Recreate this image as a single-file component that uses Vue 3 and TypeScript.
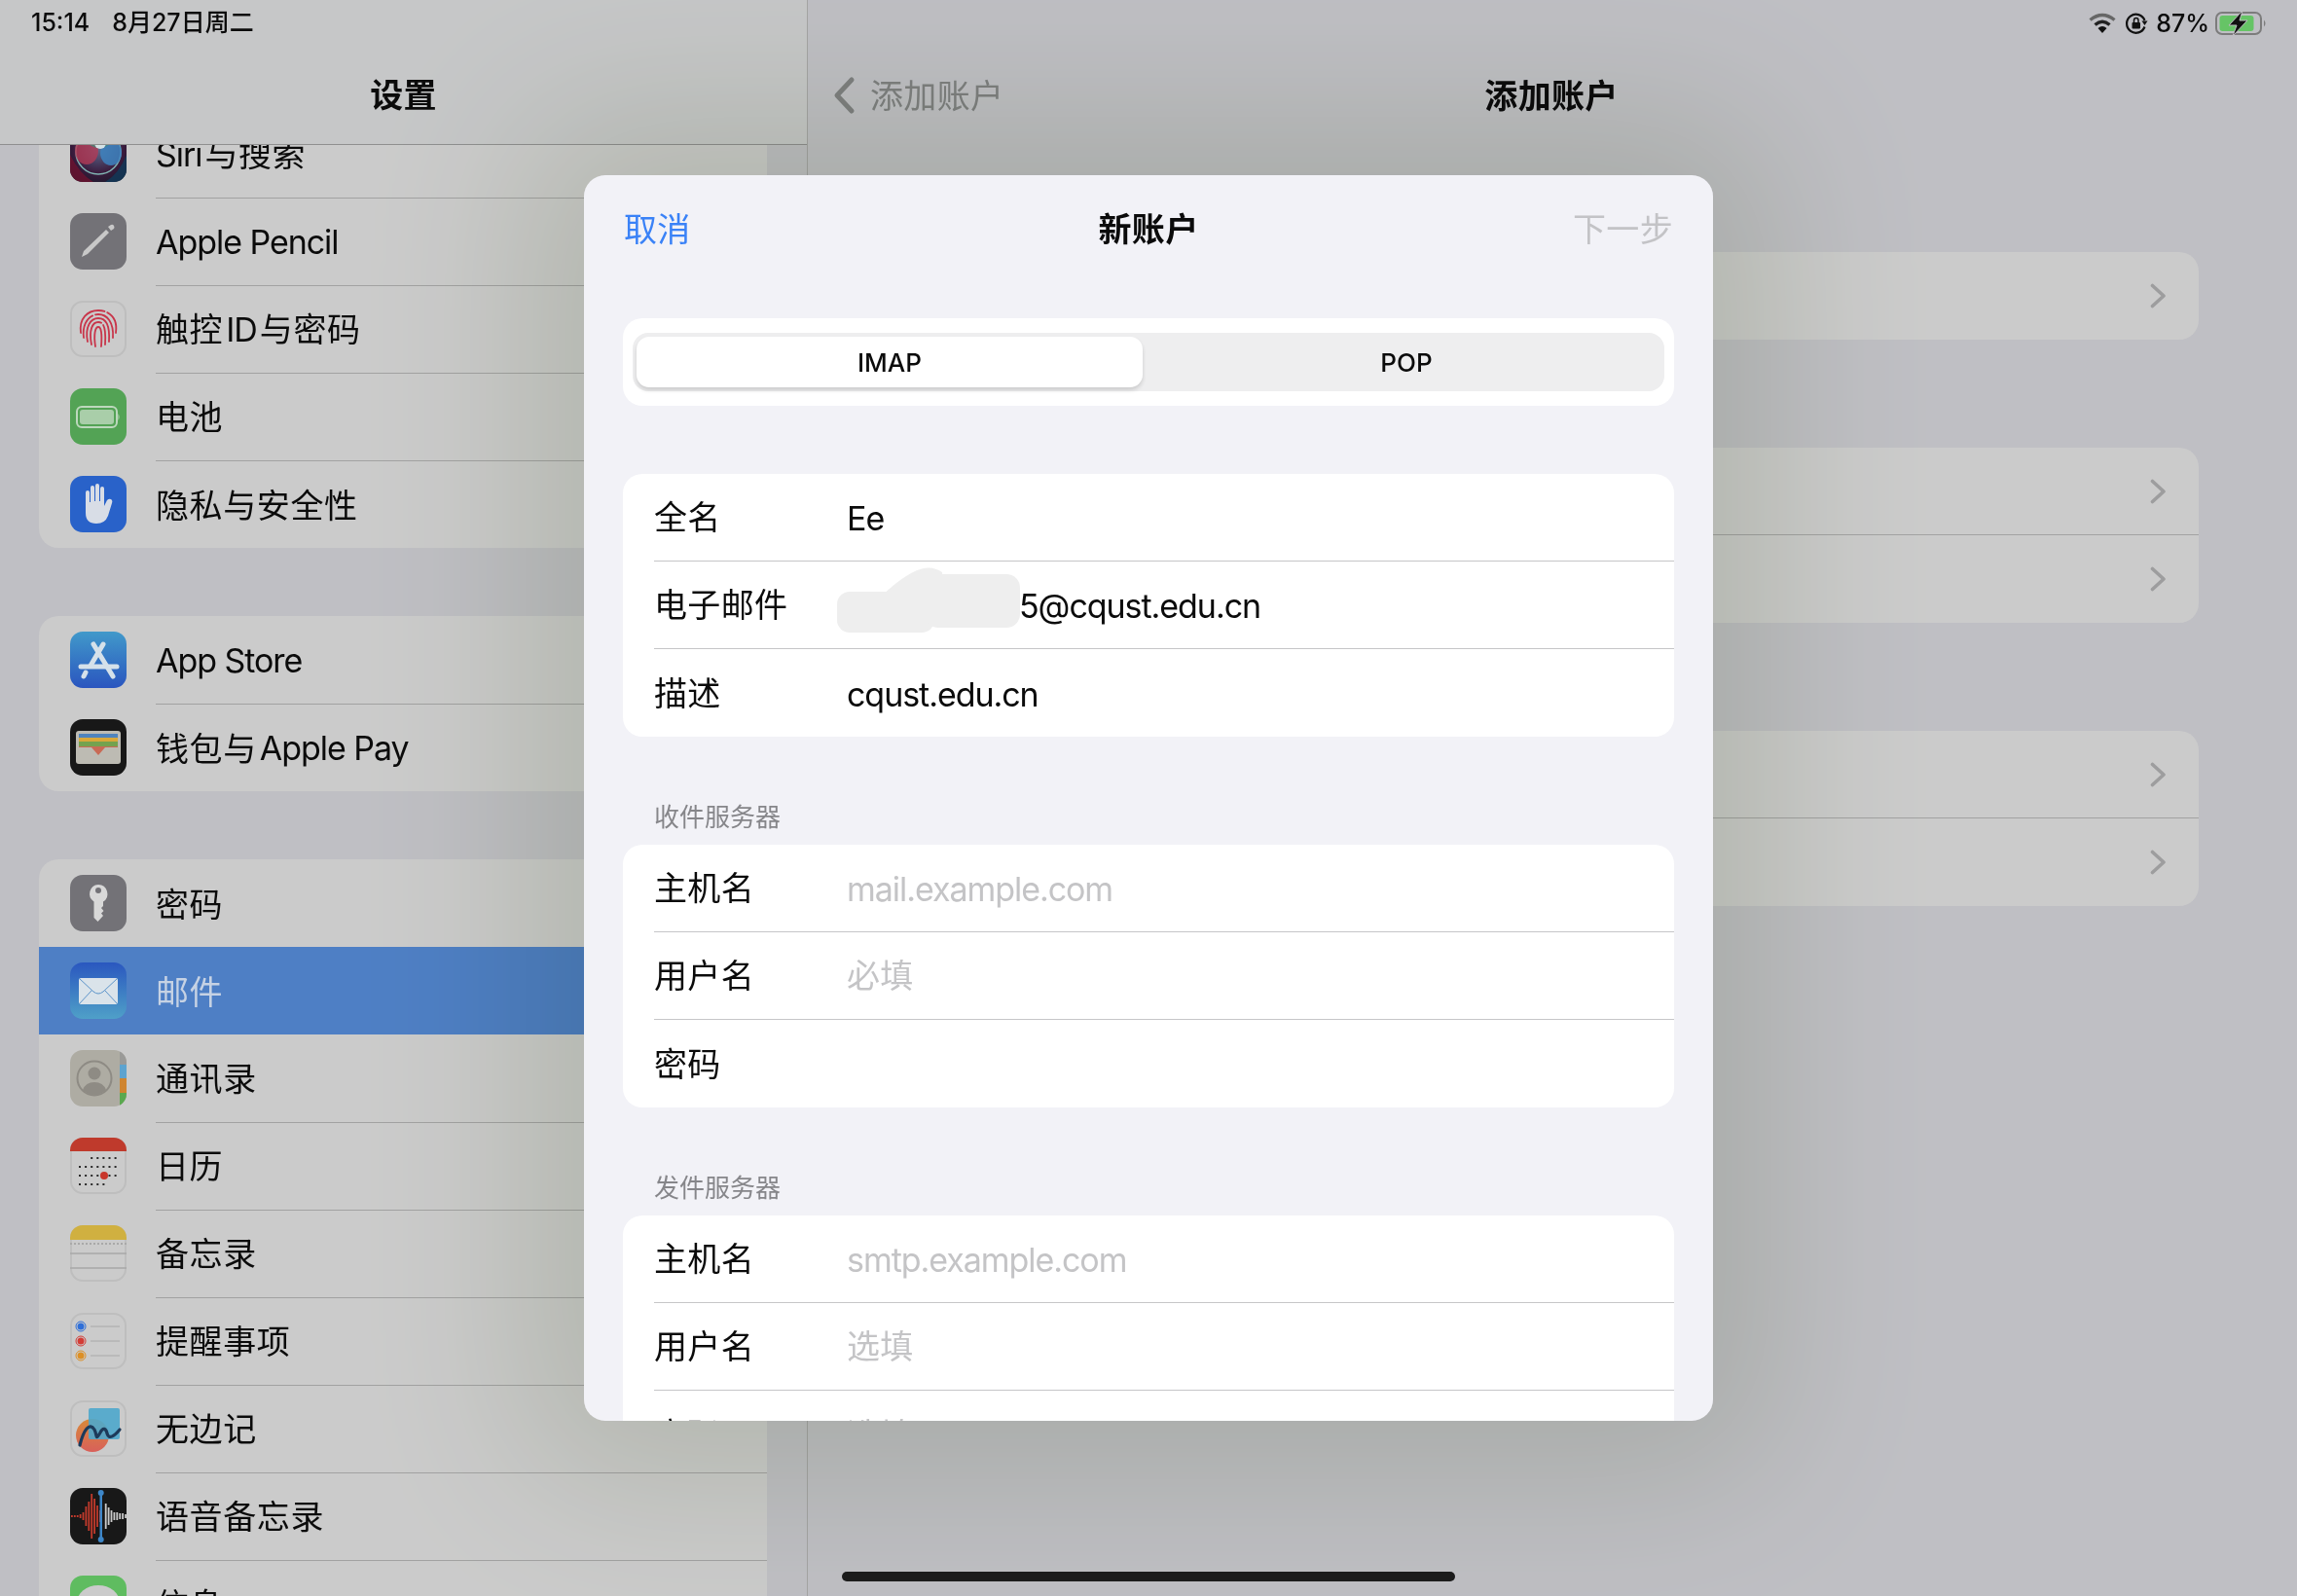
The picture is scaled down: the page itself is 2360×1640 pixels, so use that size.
<template>
  <div class="ipad">
    <aside class="sidebar">
      <header class="nav side-nav"><span class="nav-title cjk">设置</span></header>
      <div class="side-list">
        <section v-for="(group, g) in sideGroups" :key="g" class="side-group">
          <div
            v-for="(item, i) in group"
            :key="item.id"
            class="side-row"
            :class="{ selected: item.id === 'mail', 'no-line': i === group.length - 1 || item.id === 'mail' || group[i + 1]?.id === 'mail' }"
          >
            <div class="app-icon" :class="{ outlined: outlinedIcons.includes(item.id) }">
              <svg viewBox="0 0 58 58" width="58" height="58">
                <template v-if="item.id === 'siri'">
                  <defs>
                    <radialGradient id="siri-bg" cx="0.5" cy="0.4" r="0.75">
                      <stop offset="0%" stop-color="#5b6f92" />
                      <stop offset="60%" stop-color="#3a1a3c" />
                      <stop offset="100%" stop-color="#0f1a26" />
                    </radialGradient>
                  </defs>
                  <rect width="58" height="58" fill="url(#siri-bg)" />
                  <path d="M0 58V30Q10 50 24 58Z" fill="#6e1230" opacity=".8" />
                  <path d="M58 58V30Q50 50 36 58Z" fill="#123a5a" opacity=".8" />
                  <circle cx="29" cy="27" r="23" fill="none" stroke="#7fb3b2" stroke-width="1.5" />
                  <ellipse cx="17" cy="26" rx="12" ry="14" fill="#b23a55" opacity=".8" />
                  <ellipse cx="42" cy="28" rx="11" ry="13" fill="#3d82c0" opacity=".85" />
                  <ellipse cx="30" cy="15" rx="12" ry="8" fill="#3a8f78" opacity=".7" />
                  <circle cx="31" cy="18" r="6" fill="#e6ecef" opacity=".9" />
                </template>
                <template v-else-if="item.id === 'pencil'">
                  <rect width="58" height="58" fill="#737277" />
                  <path d="M12 45 14 39 37 17 40 20 18 42Z" fill="#c8c8c8" />
                  <path d="M39 14 42 12Q44 11 45 13 46 15 45 16L42 18Z" fill="#c8c8c8" />
                </template>
                <template v-else-if="item.id === 'touch'">
                  <g fill="none" stroke="#c8354a" stroke-width="1.800" stroke-linecap="round">
                    <path d="M11 33C9 18 18 10 29 10 41 10 49 19 47 33" stroke-dasharray="40 3 30 3 60" />
                    <path d="M14 38C12 23 20 14 29 14 38 14 45 22 44 38" stroke-dasharray="26 3 60" />
                    <path d="M18 42C15 27 21 18 29 18 37 18 41 25 40 42" />
                    <path d="M22 45C19 30 23 22 29 22 35 22 37 29 36 45" stroke-dasharray="30 3 60" />
                    <path d="M26 47C24 34 26 27 29 27 32 27 33 34 32 47" />
                  </g>
                </template>
                <template v-else-if="item.id === 'battery'">
                  <rect width="58" height="58" fill="#53a355" />
                  <rect x="7" y="19" width="41" height="21" rx="5" fill="none" stroke="#bdd8bd" stroke-width="2" />
                  <rect x="10" y="22" width="35" height="15" rx="3" fill="#a9cea9" />
                  <path d="M49.500 26Q51.500 29.500 49.500 33Z" fill="#bdd8bd" />
                </template>
                <template v-else-if="item.id === 'privacy'">
                  <rect width="58" height="58" fill="#2962c9" />
                  <path
                    d="M16 17Q16 15 18 15 20 15 20 17V27H21V12Q21 10 23 10 25 10 25 12V26H26V10Q26 8 28 8 30 8 30 10V26H31V13Q31 11 33 11 35 11 35 13V31L38 25Q40 23 42 24 44 25 43 28L39 41Q36 49 27 49 16 49 16 38Z"
                    fill="#d8dde6"
                  />
                </template>
                <template v-else-if="item.id === 'store'">
                  <defs>
                    <linearGradient id="store-bg" x1="0" y1="0" x2="0" y2="1">
                      <stop offset="0%" stop-color="#4199ca" />
                      <stop offset="100%" stop-color="#2a55bf" />
                    </linearGradient>
                  </defs>
                  <rect width="58" height="58" fill="url(#store-bg)" />
                  <g fill="none" stroke="#d5e1ea" stroke-width="5" stroke-linecap="round">
                    <path d="M24 13 44 46" />
                    <path d="M34 13 21 35" />
                    <path d="M16 42 14 46" />
                    <path d="M11 36H48" />
                  </g>
                </template>
                <template v-else-if="item.id === 'wallet'">
                  <rect width="58" height="58" fill="#181818" />
                  <rect x="6" y="12" width="46" height="34" rx="3" fill="#bdbbb3" />
                  <rect x="9" y="15" width="40" height="4" fill="#4f84bd" />
                  <rect x="9" y="19" width="40" height="4" fill="#d9a83a" />
                  <rect x="9" y="23" width="40" height="5" fill="#74a24f" />
                  <path d="M9 28H49V29H36L29 37 22 29H9Z" fill="#c96a55" />
                </template>
                <template v-else-if="item.id === 'password'">
                  <rect width="58" height="58" fill="#737277" />
                  <path
                    d="M29 10A9.500 9.500 0 0 1 34 27.500V32L32 34 34.500 37 32 39.500 34 42 28.500 48 24.500 44V27.500A9.500 9.500 0 0 1 29 10Z"
                    fill="#d8d8d8"
                  />
                  <circle cx="29" cy="16" r="3" fill="#737277" />
                </template>
                <template v-else-if="item.id === 'mail'">
                  <defs>
                    <linearGradient id="mail-bg" x1="0" y1="0" x2="0" y2="1">
                      <stop offset="0%" stop-color="#2a57bf" />
                      <stop offset="100%" stop-color="#4fa0c8" />
                    </linearGradient>
                  </defs>
                  <rect width="58" height="58" fill="url(#mail-bg)" />
                  <rect x="9" y="16" width="40" height="27" rx="2" fill="#dae3ea" />
                  <path d="M9 16 24 30Q29 34 34 30L49 16M9 43 22 29M49 43 36 29" fill="none" stroke="#5b93c9" stroke-width="1" />
                </template>
                <template v-else-if="item.id === 'contacts'">
                  <rect width="58" height="58" fill="#aeaca3" />
                  <rect x="51" width="7" height="15" fill="#9a9a98" />
                  <rect x="51" y="15" width="7" height="14" fill="#5da3cf" />
                  <rect x="51" y="29" width="7" height="15" fill="#cf8530" />
                  <rect x="51" y="44" width="7" height="14" fill="#5aa84f" />
                  <circle cx="25" cy="29" r="17.500" fill="none" stroke="#8e8b84" stroke-width="2" />
                  <circle cx="25" cy="24" r="6.500" fill="#8e8b84" />
                  <path d="M13 41Q16 33 25 33 34 33 37 41 32 46 25 46 18 46 13 41Z" fill="#8e8b84" />
                </template>
                <template v-else-if="item.id === 'calendar'">
                  <rect width="58" height="14" fill="#bf3a2c" />
                  <rect v-for="d in calendarDots" :key="d.x + '-' + d.y" :x="d.x" :y="d.y" width="2" height="2" fill="#2b2b2b" />
                  <circle cx="35" cy="39" r="4" fill="#c8372c" />
                </template>
                <template v-else-if="item.id === 'notes'">
                  <rect width="58" height="15" fill="#d0b040" />
                  <path d="M0 19H58" stroke="#a9a9a9" stroke-width="2" stroke-dasharray="2 2" />
                  <path d="M0 29H58M0 44H58" stroke="#a8a8a8" stroke-width="1.500" />
                </template>
                <template v-else-if="item.id === 'reminders'">
                  <template v-for="r in reminderDots" :key="r.y">
                    <circle cx="11" :cy="r.y" r="5" fill="none" :stroke="r.color" stroke-width="1" />
                    <circle cx="11" :cy="r.y" r="3.500" :fill="r.color" />
                    <path :d="`M21 ${r.y}H51`" stroke="#a8a8a8" stroke-width="1" />
                  </template>
                </template>
                <template v-else-if="item.id === 'freeform'">
                  <defs>
                    <linearGradient id="free-bg" x1="0" y1="0" x2="0" y2="1">
                      <stop offset="0%" stop-color="#d98a3a" />
                      <stop offset="100%" stop-color="#d8605a" />
                    </linearGradient>
                  </defs>
                  <circle cx="23" cy="36" r="17" fill="url(#free-bg)" />
                  <rect x="19" y="8" width="32" height="32" rx="2" fill="#4ea7cc" opacity=".9" />
                  <path d="M10 46C14 30 20 22 25 30 28 36 26 42 31 33 34 27 37 29 38 34 40 41 46 36 51 30" fill="none" stroke="#1d3a5a" stroke-width="3.200" stroke-linecap="round" />
                </template>
                <template v-else-if="item.id === 'voice'">
                  <rect width="58" height="58" fill="#181818" />
                  <rect v-for="b in voiceBars" :key="b.x" :x="b.x" :y="29 - b.h / 2" width="1.800" :height="b.h" :fill="b.x < 31 ? '#c23a2c' : '#c9c9c9'" />
                  <rect x="30.500" y="5" width="2.500" height="48" fill="#3d86c8" />
                  <circle cx="31.700" cy="5" r="3" fill="#3d86c8" />
                  <circle cx="31.700" cy="53" r="3" fill="#3d86c8" />
                </template>
                <template v-else-if="item.id === 'message'">
                  <rect width="58" height="58" fill="#5fbc60" />
                  <ellipse cx="29" cy="28" rx="22" ry="18" fill="#cbcbcb" />
                </template>
              </svg>
            </div>
            <div class="side-body">
              <span v-for="(r, k) in runs(item.label)" :key="k" :class="r.latin ? 'latin' : 'cjk'">{{ r.text }}</span>
            </div>
          </div>
        </section>
      </div>
    </aside>

    <main class="detail">
      <header class="nav detail-nav">
        <div class="back">
          <svg width="26" height="40" viewBox="0 0 26 40">
            <path d="M21 4 6 20 21 36" fill="none" stroke="#7e8080" stroke-width="5" stroke-linecap="round" stroke-linejoin="round" />
          </svg>
          <span class="cjk">添加账户</span>
        </div>
        <span class="nav-title cjk">添加账户</span>
        <span></span>
      </header>
      <div class="detail-list">
        <section v-for="(count, g) in detailGroups" :key="g" class="detail-group">
          <div v-for="n in count" :key="n" class="detail-row">
            <svg width="17" height="26" viewBox="0 0 17 26">
              <path d="M2.500 2.500 14 13 2.500 23.500" fill="none" stroke="#9d9d9e" stroke-width="3.600" stroke-linecap="round" stroke-linejoin="round" />
            </svg>
          </div>
        </section>
      </div>
    </main>

    <div class="status-left">
      <span>15:14</span>
      <span>8月27日周二</span>
    </div>
    <div class="status-right">
      <svg class="wifi" width="30" height="22" viewBox="0 0 30 22">
        <path d="M15 21 10.500 16Q15 12 19.500 16Z" fill="#111" />
        <path d="M7.500 12.500Q15 6 22.500 12.500" fill="none" stroke="#222" stroke-width="3.400" />
        <path d="M2.500 7.500Q15 -2.500 27.500 7.500" fill="none" stroke="#666" stroke-width="3.400" />
      </svg>
      <svg class="rotation" width="24" height="24" viewBox="0 0 24 24">
        <path d="M20.500 9A9.500 9.500 0 1 0 20.500 15.500" fill="none" stroke="#111" stroke-width="2.200" />
        <path d="M17.500 9.500H23.500L20.500 14Z" fill="#111" />
        <rect x="7.500" y="11" width="8.500" height="6.500" rx="1" fill="#111" />
        <path d="M9.500 11V9Q9.500 6.500 11.800 6.500 14 6.500 14 9V11" fill="none" stroke="#111" stroke-width="1.500" />
      </svg>
      <span class="percent">87%</span>
      <svg width="54" height="26" viewBox="0 0 54 26">
        <rect x="1" y="2" width="46" height="22" rx="6" fill="none" stroke="#7c7c7c" stroke-width="2" />
        <rect x="4.500" y="5" width="35" height="16" rx="3" fill="#66c466" />
        <path d="M50 9.500Q53 13 50 16.500Z" fill="#7c7c7c" />
        <path d="M28 0 14 15H22L18 26 33 10H25Z" fill="#111" stroke="#c0bfc4" stroke-width="1" />
      </svg>
    </div>

    <div class="modal-shadow"></div>
    <div class="modal">
      <header class="modal-nav">
        <span class="cancel cjk">取消</span>
        <span class="modal-title cjk">新账户</span>
        <span class="next cjk">下一步</span>
      </header>

      <section class="card segment-card">
        <div class="segment">
          <div class="seg-item active">IMAP</div>
          <div class="seg-item">POP</div>
        </div>
      </section>

      <section v-for="form in forms" :key="form.title" class="form-section">
        <h3 v-if="form.title.length" class="form-title">{{ form.title }}</h3>
        <div class="card">
          <div v-for="field in form.fields" :key="field.label" class="form-row">
            <span class="form-label cjk">{{ field.label }}</span>
            <span v-if="field.value || field.hint" :class="{ hint: !field.value, 'email-value': field.redacted }">
              <span v-for="(r, k) in runs(field.value || field.hint || '')" :key="k" :class="r.latin ? 'latin' : 'cjk'">{{ r.text }}</span>
            </span>
            <svg v-if="field.redacted" class="blur-blob" width="190" height="68" viewBox="0 0 190 68">
              <g fill="#eeeeee">
                <rect x="0" y="26" width="100" height="42" rx="13" />
                <rect x="90" y="8" width="98" height="55" rx="14" />
                <path d="M40 36Q62 14 78 6 95 -3 108 6L112 44H40Z" />
              </g>
            </svg>
          </div>
        </div>
      </section>
    </div>

    <div class="home-bar"></div>
  </div>
</template>

<script setup lang="ts">
interface SideItem {
  id: string
  label: string
}

interface Field {
  label: string
  value?: string
  hint?: string
  redacted?: boolean
}

const sideGroups: SideItem[][] = [
  [
    { id: 'siri', label: 'Siri与搜索' },
    { id: 'pencil', label: 'Apple Pencil' },
    { id: 'touch', label: '触控ID与密码' },
    { id: 'battery', label: '电池' },
    { id: 'privacy', label: '隐私与安全性' }
  ],
  [
    { id: 'store', label: 'App Store' },
    { id: 'wallet', label: '钱包与Apple Pay' }
  ],
  [
    { id: 'password', label: '密码' },
    { id: 'mail', label: '邮件' },
    { id: 'contacts', label: '通讯录' },
    { id: 'calendar', label: '日历' },
    { id: 'notes', label: '备忘录' },
    { id: 'reminders', label: '提醒事项' },
    { id: 'freeform', label: '无边记' },
    { id: 'voice', label: '语音备忘录' },
    { id: 'message', label: '信息' }
  ]
]

const outlinedIcons = ['touch', 'calendar', 'notes', 'reminders', 'freeform']

const detailGroups = [1, 2, 2]

const forms: { title: string; fields: Field[] }[] = [
  {
    title: '',
    fields: [
      { label: '全名', value: 'Ee' },
      { label: '电子邮件', value: '5@cqust.edu.cn', redacted: true },
      { label: '描述', value: 'cqust.edu.cn' }
    ]
  },
  {
    title: '收件服务器',
    fields: [
      { label: '主机名', hint: 'mail.example.com' },
      { label: '用户名', hint: '必填' },
      { label: '密码' }
    ]
  },
  {
    title: '发件服务器',
    fields: [
      { label: '主机名', hint: 'smtp.example.com' },
      { label: '用户名', hint: '选填' },
      { label: '密码', hint: '选填' }
    ]
  }
]

// Latin and CJK sit differently on the line and need their own tracking
function runs(text: string) {
  return text
    .split(/([A-Za-z0-9@. ]+)/)
    .filter((t) => t.length > 0)
    .map((t) => ({ text: t, latin: /^[A-Za-z0-9@. ]/.test(t) }))
}

// calendar month grid, rows start/stop where the real icon's weeks do
const calendarDots: { x: number; y: number }[] = []
const weeks = [
  { y: 20, from: 2, to: 6 },
  { y: 29, from: 0, to: 6 },
  { y: 38, from: 0, to: 6 },
  { y: 47, from: 0, to: 4 }
]
for (const w of weeks) {
  for (let i = w.from; i <= w.to; i++) {
    calendarDots.push({ x: 9 + i * 6.1, y: w.y })
  }
}

const reminderDots = [
  { y: 14, color: '#2f6fd8' },
  { y: 29, color: '#d33c36' },
  { y: 44, color: '#dc8f25' }
]

const barHeights = [2, 2, 2, 4, 8, 20, 30, 46, 36, 22, 12, 0, 26, 18, 12, 8, 8, 6, 6, 4]
const voiceBars = barHeights
  .map((h, i) => ({ x: 1 + i * 2.9, h }))
  .filter((b) => b.h > 0)
</script>

<style>
html,
body {
  margin: 0;
  background: #bfbfc4;
}
</style>

<style scoped>
.ipad {
  position: relative;
  display: flex;
  width: 2360px;
  height: 1640px;
  overflow: hidden;
  background: #bfbfc4;
  color: #0b0b0b;
  font-family: Inter, "Noto Sans CJK SC", sans-serif;
  font-size: 34px;
}

.cjk {
  position: relative;
  top: -2px;
  letter-spacing: 0.35px;
}

.latin {
  position: relative;
  top: 1px;
  letter-spacing: -1.05px;
}

.cjk + .latin,
.latin + .cjk {
  margin-left: 3px;
}

.nav {
  height: 149px;
  box-sizing: border-box;
  padding-top: 47px;
  position: relative;
  z-index: 1;
}

.nav-title {
  font-weight: 700;
  font-size: 34px;
}

.sidebar {
  flex: none;
  width: 829px;
  border-right: 1px solid #a4a4a4;
  overflow: hidden;
}

.side-nav {
  display: flex;
  align-items: center;
  justify-content: center;
  background: #c6c7c8;
  border-bottom: 1px solid #8f8f8f;
}

.side-list {
  margin-top: -36px;
  padding: 0 41px 0 40px;
  display: flex;
  flex-direction: column;
  gap: 70px;
}

.side-group {
  background: #cbcbcb;
  border-radius: 20px;
  overflow: hidden;
}

.side-row {
  display: flex;
  align-items: center;
  height: 90px;
  padding-left: 32px;
}

.side-row.selected {
  background: #4e7fc5;
  color: #c6d2e4;
}

.app-icon {
  flex: none;
  width: 58px;
  height: 58px;
  border-radius: 13px;
  overflow: hidden;
  box-sizing: border-box;
}

.app-icon svg {
  display: block;
}

.app-icon.outlined {
  box-shadow: inset 0 0 0 2px #bebebe;
}

/* one pixel taller than the row, so the hairline falls on the next row's first line */
.side-body {
  flex: 1;
  align-self: flex-start;
  height: 91px;
  margin-left: 30px;
  display: flex;
  align-items: center;
  border-bottom: 1px solid #a2a2a2;
  box-sizing: border-box;
}

.side-body .cjk {
  top: -1.5px;
  letter-spacing: 0.6px;
}

.side-body .latin {
  top: 0;
}

.no-line .side-body {
  border-bottom: none;
}

.detail {
  flex: 1;
  min-width: 0;
}

.detail-nav {
  display: grid;
  grid-template-columns: 1fr auto 1fr;
  align-items: center;
  padding-left: 24px;
  padding-right: 26px;
}

.back {
  display: flex;
  align-items: center;
  gap: 14px;
  color: #7e8080;
}

.detail-list {
  padding: 110px 101px 0;
  display: flex;
  flex-direction: column;
  gap: 111px;
}

.detail-group {
  background: #cbcbcb;
  border-radius: 20px;
  overflow: hidden;
}

.detail-row {
  height: 90px;
  display: flex;
  align-items: center;
  justify-content: flex-end;
  padding-right: 33px;
  box-sizing: border-box;
}

.detail-row:not(:last-child) {
  border-bottom: 1px solid #a2a2a2;
}

.status-left {
  position: absolute;
  top: 8px;
  left: 32px;
  display: flex;
  gap: 23px;
  font-size: 25px;
  line-height: 30px;
  font-weight: 500;
  z-index: 4;
}

.status-right {
  position: absolute;
  top: 10px;
  right: 30px;
  display: flex;
  align-items: center;
  gap: 10px;
  z-index: 4;
  font-size: 25px;
  line-height: 28px;
  font-weight: 500;
}

.wifi {
  margin-right: -2px;
}

.rotation {
  margin-right: -3px;
}

.percent {
  margin: 0 -4px 0 1px;
}

/* multiply, so the dim also darkens the blue row instead of greying it */
.modal-shadow {
  position: absolute;
  top: 180px;
  left: 600px;
  width: 1160px;
  height: 1280px;
  border-radius: 22px;
  z-index: 2;
  mix-blend-mode: multiply;
  box-shadow: 0 0 170px 60px rgb(224, 228, 218);
}

.modal {
  position: absolute;
  top: 180px;
  left: 600px;
  width: 1160px;
  height: 1280px;
  background: #f2f2f7;
  border-radius: 22px;
  overflow: hidden;
  z-index: 3;
}

.modal-nav {
  display: grid;
  grid-template-columns: 1fr auto 1fr;
  align-items: center;
  height: 110px;
  padding: 0 41px;
  margin-bottom: 37px;
}

.cancel {
  color: #3a82f7;
}

.next {
  color: #c3c3c6;
  justify-self: end;
}

.modal-title {
  font-weight: 700;
}

.card {
  margin: 0 40px;
  background: #fff;
  border-radius: 20px;
  overflow: hidden;
}

.segment-card {
  height: 90px;
  padding: 15px 10px;
  box-sizing: border-box;
}

.segment {
  display: flex;
  height: 60px;
  padding: 4px;
  box-sizing: border-box;
  background: #eeeeef;
  border-radius: 16px;
  font-size: 26px;
  font-weight: 500;
}

.seg-item {
  flex: 1;
  display: flex;
  align-items: center;
  justify-content: center;
  padding-left: 10px;
}

.seg-item.active {
  flex: none;
  width: 520px;
  padding-left: 0;
  background: #fff;
  border-radius: 13px;
  box-shadow: 0 3px 4px rgba(0, 0, 0, 0.14);
}

.form-section {
  margin-top: 70px;
}

.form-section + .form-section {
  margin-top: 0;
}

.form-title {
  margin: 0;
  height: 111px;
  padding: 0 72px 12px;
  box-sizing: border-box;
  display: flex;
  align-items: flex-end;
  font-size: 26px;
  line-height: 32px;
  font-weight: 400;
  color: #86868a;
}

.form-row {
  position: relative;
  display: flex;
  align-items: center;
  height: 90px;
  margin-left: 32px;
  box-sizing: border-box;
  border-bottom: 1px solid #c6c6c8;
}

.form-row:last-child {
  border-bottom: none;
}

.form-label {
  flex: none;
  width: 198px;
}

.email-value {
  margin-left: 177px;
}

.hint {
  color: #c4c4c6;
}

.blur-blob {
  position: absolute;
  top: 5px;
  left: 188px;
}

.home-bar {
  position: absolute;
  left: 865px;
  bottom: 15px;
  width: 630px;
  height: 10px;
  border-radius: 5px;
  background: #1c1c1c;
  z-index: 4;
}
</style>
